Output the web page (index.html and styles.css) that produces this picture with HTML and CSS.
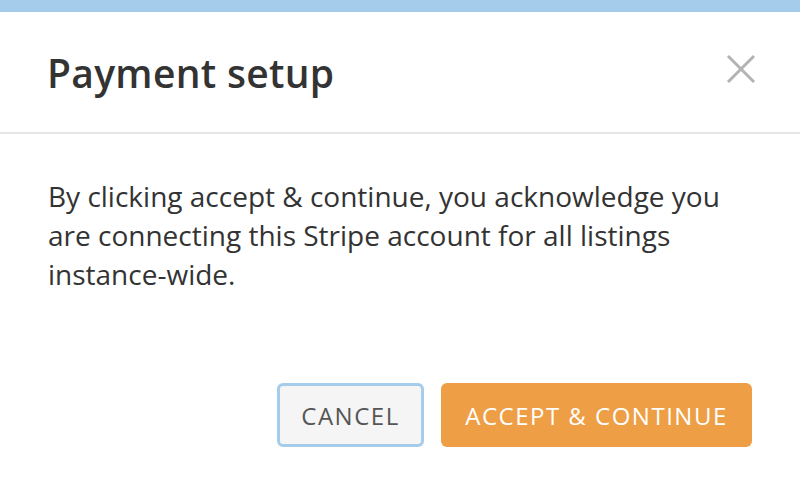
FILE: index.html
```html
<!DOCTYPE html>
<html>
<head>
<meta charset="utf-8">
<link rel="stylesheet" href="styles.css">
</head>
<body>
<div class="topbar"></div>
<div class="modal">
  <div class="header">
    <h1 class="title">Payment setup</h1>
    <button class="close" aria-label="Close">
      <svg width="30" height="30" viewBox="0 0 30 30"><path d="M2 2 L28 28 M28 2 L2 28" stroke="#b3b3b3" stroke-width="3" fill="none"/></svg>
    </button>
  </div>
  <div class="content">
    <p class="text">By clicking accept &amp; continue, you acknowledge you are connecting this Stripe account for all listings instance-wide.</p>
  </div>
  <div class="footer">
    <button class="btn btn-cancel">CANCEL</button>
    <button class="btn btn-accept">ACCEPT &amp; CONTINUE</button>
  </div>
</div>
</body>
</html>
```
FILE: styles.css
```css
html, body {
  margin: 0;
  padding: 0;
  background: #fff;
  font-family: "Open Sans", sans-serif;
}
.topbar {
  height: 12px;
  background: #a5cceb;
}
.modal {
  display: flex;
  flex-direction: column;
}
.header {
  height: 120px;
  display: flex;
  align-items: center;
  justify-content: space-between;
  padding: 0 44px 0 47px;
  border-bottom: 2px solid #e6e6e6;
}
.title {
  margin: 0;
  font-size: 39px;
  font-weight: 600;
  letter-spacing: 0.3px;
  color: #333;
}
.close {
  border: 0;
  background: none;
  padding: 0;
  margin-top: -7px;
  width: 30px;
  height: 30px;
}
.close svg { display: block; }
.content {
  padding: 43px 47px 0 48px;
}
.text {
  margin: 0;
  font-size: 28px;
  line-height: 39px;
  color: #333;
  max-width: 700px;
}
.footer {
  display: flex;
  justify-content: flex-end;
  gap: 17px;
  padding: 89px 48px 0;
}
.btn {
  height: 64px;
  border-radius: 6px;
  font-family: "Open Sans", sans-serif;
  font-size: 24px;
  letter-spacing: 1.5px;
  cursor: pointer;
  padding: 0;
}
.btn-cancel {
  width: 147px;
  background: #f5f5f5;
  color: #555;
  border: 3px solid #a5cceb;
}
.btn-accept {
  width: 311px;
  background: #ee9e45;
  color: #fff;
  border: 0;
}
```
